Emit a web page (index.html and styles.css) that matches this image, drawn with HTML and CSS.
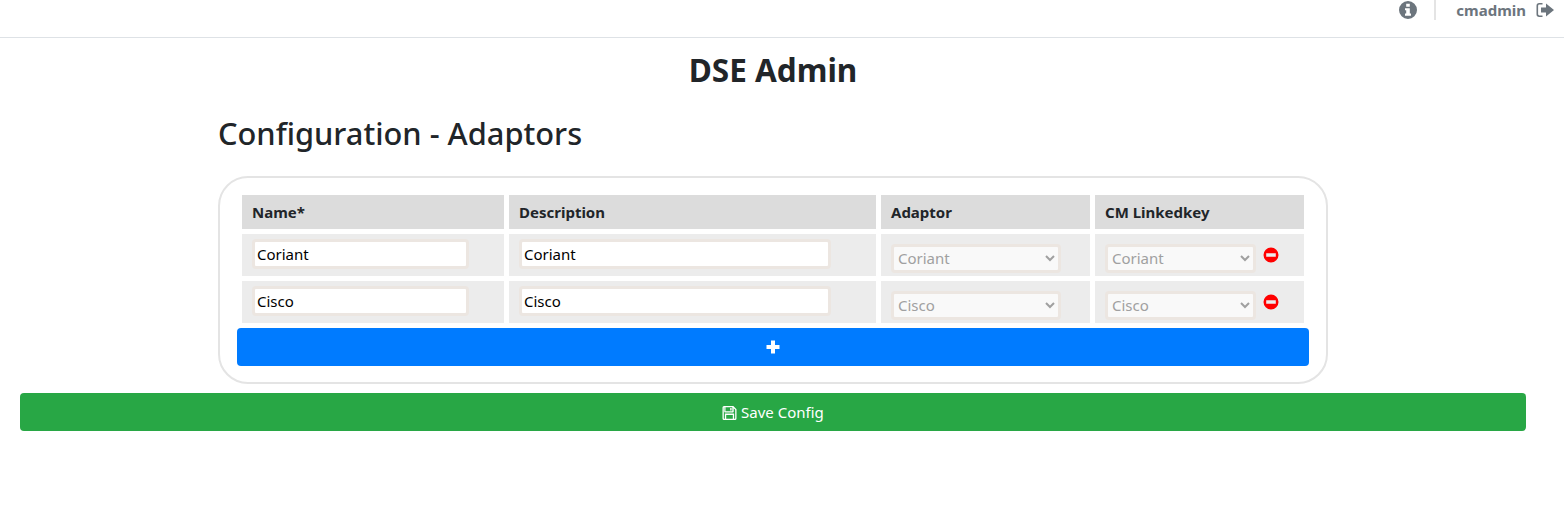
FILE: index.html
```html
<!DOCTYPE html>
<html lang="en">
<head>
    <meta charset="UTF-8">
    <title>DSE Admin</title>
    <link rel="stylesheet" href="styles.css">
</head>
<body>
    <div class="topbar">
        <svg class="top-icon" viewBox="0 0 18 18"><path fill-rule="evenodd" d="M9 0a9 9 0 1 1 0 18A9 9 0 0 1 9 0zM7.200 2.800v2.900h3.600V2.800zM6 7.200v2h1.200v3.400H6v2.200h6v-2.200h-1.200V7.200z"/></svg>
        <div class="top-divider"></div>
        <span class="username">cmadmin</span>
        <svg class="top-icon logout" viewBox="0 0 18 16"><path d="M6.500 1H3.200A2.700 2.700 0 0 0 .5 3.700v8.600A2.700 2.700 0 0 0 3.200 15h3.300v-1.600H3.400a1.300 1.300 0 0 1-1.300-1.300V3.900a1.300 1.300 0 0 1 1.300-1.300h3.100z"/><path d="M10 1.500 18 8l-8 6.500v-4H5v-5h5z"/></svg>
    </div>

    <div class="main">
        <h1>DSE Admin</h1>
        <div class="container">
            <h2>Configuration - Adaptors</h2>
            <div class="card">
                <table class="adaptors">
                    <colgroup>
                        <col class="col-name">
                        <col class="col-desc">
                        <col class="col-adaptor">
                        <col class="col-key">
                    </colgroup>
                    <thead>
                        <tr>
                            <th>Name*</th>
                            <th>Description</th>
                            <th>Adaptor</th>
                            <th>CM Linkedkey</th>
                        </tr>
                    </thead>
                    <tbody>
                        <tr>
                            <td><input class="name-input" type="text" value="Coriant"></td>
                            <td><input class="desc-input" type="text" value="Coriant"></td>
                            <td><select class="adaptor-select" disabled><option>Coriant</option></select></td>
                            <td>
                                <select class="key-select" disabled><option>Coriant</option></select>
                                <svg class="remove" viewBox="0 0 16 16"><path fill-rule="evenodd" d="M8 .5a7.500 7.500 0 1 1 0 15 7.500 7.500 0 0 1 0-15zM3.200 6.300v3.400h9.600V6.300z"/></svg>
                            </td>
                        </tr>
                        <tr>
                            <td><input class="name-input" type="text" value="Cisco"></td>
                            <td><input class="desc-input" type="text" value="Cisco"></td>
                            <td><select class="adaptor-select" disabled><option>Cisco</option></select></td>
                            <td>
                                <select class="key-select" disabled><option>Cisco</option></select>
                                <svg class="remove" viewBox="0 0 16 16"><path fill-rule="evenodd" d="M8 .5a7.500 7.500 0 1 1 0 15 7.500 7.500 0 0 1 0-15zM3.200 6.300v3.400h9.600V6.300z"/></svg>
                            </td>
                        </tr>
                    </tbody>
                </table>
                <button class="btn add-btn">
                    <svg class="plus" viewBox="0 0 14 14"><path d="M5 .5h4V5h4.500v4H9v4.500H5V9H.5V5H5z"/></svg>
                </button>
            </div>
        </div>
        <button class="btn save-btn">
            <svg class="save-icon" viewBox="0 0 14 14"><path fill-rule="evenodd" d="M1.500 0h9.300L14 3.200v9.300a1.500 1.500 0 0 1-1.500 1.500h-11A1.500 1.500 0 0 1 0 12.500v-11A1.500 1.500 0 0 1 1.500 0zM3 1.300v3.900h6.800V1.300zM1.300 1.800v10.400c0 .3.200.5.500.5h.6V7.600h9.200v5.100h.6c.3 0 .5-.2.500-.5V3.800l-1.500-1.500v3.400a.8.800 0 0 1-.8.800H2.600a.8.800 0 0 1-.8-.8V1.300c-.3 0-.5.200-.5.500zM3.700 8.900v3.800h6.600V8.900zM7.700 2h1.400v2.500H7.700z"/></svg>
            Save Config
        </button>
    </div>
</body>
</html>
```

FILE: styles.css
```css
* {
    box-sizing: border-box;
}
body {
    margin: 0;
    background: #fff;
    color: #212529;
    font-family: "Noto Sans", "Open Sans", sans-serif;
}

/* top bar */
.topbar {
    height: 38px;
    border-bottom: 1px solid #dee2e6;
    display: flex;
    justify-content: flex-end;
    align-items: flex-start;
    padding-right: 10px;
}
.top-icon {
    width: 18px;
    height: 18px;
    margin-top: 1px;
    fill: #6c757d;
}
.top-divider {
    width: 2px;
    height: 20px;
    background: #e4e4e4;
    margin: 0 20px 0 17px;
}
.username {
    font-size: 15px;
    font-weight: 700;
    line-height: 20px;
    color: #6c757d;
}
.logout {
    margin-left: 10px;
}

.main {
    width: 1546px;
    padding: 0 20px;
}
h1 {
    margin: 13px 0 0;
    font-size: 31.5px;
    line-height: 38px;
    font-weight: 700;
    text-align: center;
}
.container {
    width: 1110px;
    margin: 0 auto;
}
h2 {
    margin: 25px 0 24px;
    font-size: 30.8px;
    line-height: 38px;
    font-weight: 500;
}

/* adaptors table */
.card {
    border: 2px solid #e4e4e4;
    border-radius: 30px;
    padding: 12px 17px 16px;
}
.adaptors {
    width: 1072px;
    table-layout: fixed;
    border-collapse: separate;
    border-spacing: 5px;
}
.col-name { width: 262px; }
.col-desc { width: 367px; }
.col-adaptor { width: 209px; }
.col-key { width: 209px; }

.adaptors th {
    height: 34px;
    padding: 0 10px;
    background: #dcdcdc;
    text-align: left;
    font-size: 15px;
    font-weight: 700;
}
.adaptors td {
    height: 42px;
    padding: 0 10px;
    background: #ececec;
    white-space: nowrap;
}
input, select {
    border: 3px solid #ece6e1;
    border-radius: 4px;
    font-family: inherit;
    font-size: 15px;
    vertical-align: middle;
}
input {
    height: 30px;
    padding: 0 2px;
    background: #fff;
    color: #000;
    position: relative;
    top: -1px;
}
select {
    height: 29px;
    padding: 0;
    background-color: #f9f9f9;
    color: #a0a0a0;
    opacity: 1;
    position: relative;
    top: 3px;
}
.name-input { width: 217px; }
.desc-input { width: 312px; }
.adaptor-select { width: 170px; }
.key-select { width: 151px; }
.remove {
    width: 16px;
    height: 16px;
    margin-left: 3px;
    vertical-align: middle;
    fill: #f00;
}

/* buttons */
.btn {
    display: block;
    width: 100%;
    height: 38px;
    padding: 0 0 4px;
    border: 0;
    border-radius: 4px;
    color: #fff;
    font-family: inherit;
    font-size: 15px;
    text-align: center;
}
.add-btn {
    background: #007bff;
}
.plus {
    width: 14px;
    height: 14px;
    fill: #fff;
    vertical-align: middle;
}
.save-btn {
    margin-top: 9px;
    padding: 0;
    background: #28a745;
}
.save-icon {
    width: 15px;
    height: 14px;
    fill: #fff;
    vertical-align: -2px;
}
```
